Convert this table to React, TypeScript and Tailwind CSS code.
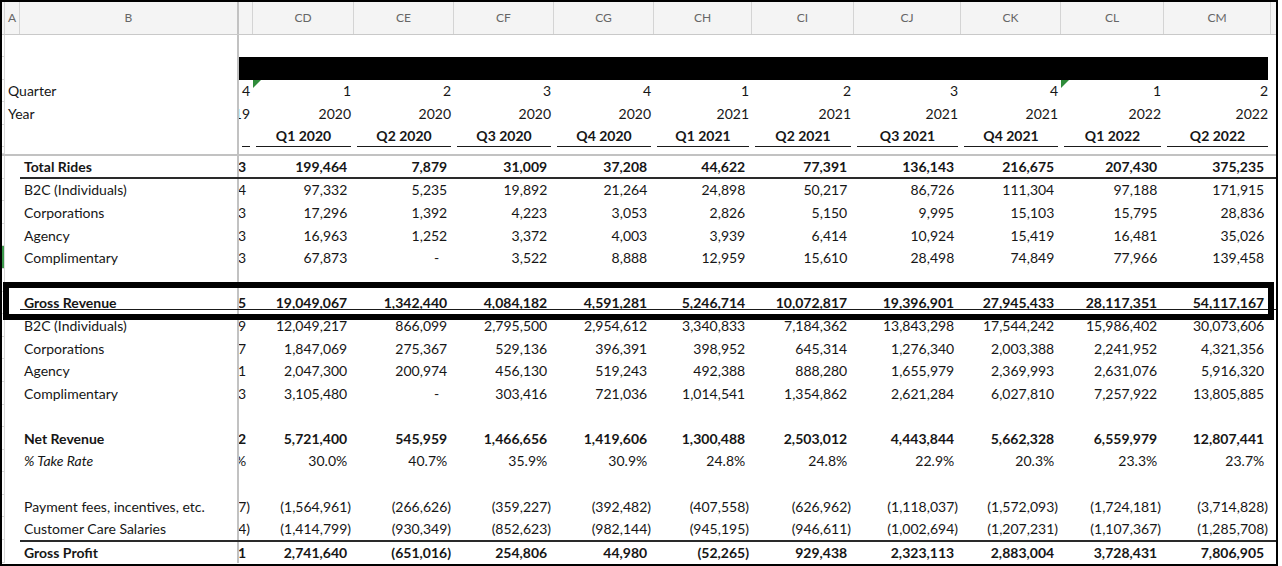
import clsx from "clsx";

const COLS = ["CD", "CE", "CF", "CG", "CH", "CI", "CJ", "CK", "CL", "CM"];
// column widths as they sit in the screenshot (not all equal)
const W = [
  "w-[101px]",
  "w-[100px]",
  "w-[100px]",
  "w-[100px]",
  "w-[98px]",
  "w-[102px]",
  "w-[107px]",
  "w-[100px]",
  "w-[103px]",
  "w-[107px]",
];

type Kind = "acct" | "plain" | "qlabel";

interface RowDef {
  label?: string;
  inA?: boolean;
  vals?: string[];
  sliver?: string;
  kind?: Kind;
  bold?: boolean;
  italic?: boolean;
  line?: "thickB" | "thinB" | "thickT";
  green?: boolean;
  bar?: boolean;
  h?: string;
  flags?: number[];
}

const ROWS: RowDef[] = [
  {},
  { bar: true },
  {
    label: "Quarter",
    inA: true,
    kind: "plain",
    sliver: "4",
    vals: ["1", "2", "3", "4", "1", "2", "3", "4", "1", "2"],
    flags: [0, 8],
  },
  {
    label: "Year",
    inA: true,
    kind: "plain",
    sliver: "2019",
    vals: ["2020", "2020", "2020", "2020", "2021", "2021", "2021", "2021", "2022", "2022"],
  },
  {
    kind: "qlabel",
    vals: ["Q1 2020", "Q2 2020", "Q3 2020", "Q4 2020", "Q1 2021", "Q2 2021", "Q3 2021", "Q4 2021", "Q1 2022", "Q2 2022"],
  },
];

const BODY: RowDef[] = [
  {
    label: "Total Rides",
    bold: true,
    line: "thickB",
    sliver: "163",
    vals: ["199,464", "7,879", "31,009", "37,208", "44,622", "77,391", "136,143", "216,675", "207,430", "375,235"],
  },
  {
    label: "B2C (Individuals)",
    sliver: "104",
    vals: ["97,332", "5,235", "19,892", "21,264", "24,898", "50,217", "86,726", "111,304", "97,188", "171,915"],
  },
  {
    label: "Corporations",
    sliver: "13",
    vals: ["17,296", "1,392", "4,223", "3,053", "2,826", "5,150", "9,995", "15,103", "15,795", "28,836"],
  },
  {
    label: "Agency",
    sliver: "13",
    vals: ["16,963", "1,252", "3,372", "4,003", "3,939", "6,414", "10,924", "15,419", "16,481", "35,026"],
  },
  {
    label: "Complimentary",
    green: true,
    sliver: "23",
    vals: ["67,873", "-", "3,522", "8,888", "12,959", "15,610", "28,498", "74,849", "77,966", "139,458"],
  },
  {},
  {
    label: "Gross Revenue",
    bold: true,
    line: "thinB",
    sliver: "15",
    vals: [
      "19,049,067",
      "1,342,440",
      "4,084,182",
      "4,591,281",
      "5,246,714",
      "10,072,817",
      "19,396,901",
      "27,945,433",
      "28,117,351",
      "54,117,167",
    ],
  },
  {
    label: "B2C (Individuals)",
    sliver: "19",
    vals: [
      "12,049,217",
      "866,099",
      "2,795,500",
      "2,954,612",
      "3,340,833",
      "7,184,362",
      "13,843,298",
      "17,544,242",
      "15,986,402",
      "30,073,606",
    ],
  },
  {
    label: "Corporations",
    sliver: "17",
    vals: ["1,847,069", "275,367", "529,136", "396,391", "398,952", "645,314", "1,276,340", "2,003,388", "2,241,952", "4,321,356"],
  },
  {
    label: "Agency",
    sliver: "11",
    vals: ["2,047,300", "200,974", "456,130", "519,243", "492,388", "888,280", "1,655,979", "2,369,993", "2,631,076", "5,916,320"],
  },
  {
    label: "Complimentary",
    sliver: "13",
    vals: ["3,105,480", "-", "303,416", "721,036", "1,014,541", "1,354,862", "2,621,284", "6,027,810", "7,257,922", "13,805,885"],
  },
  {},
  {
    label: "Net Revenue",
    bold: true,
    sliver: "12",
    vals: ["5,721,400", "545,959", "1,466,656", "1,419,606", "1,300,488", "2,503,012", "4,443,844", "5,662,328", "6,559,979", "12,807,441"],
  },
  {
    label: "% Take Rate",
    italic: true,
    sliver: "0%",
    vals: ["30.0%", "40.7%", "35.9%", "30.9%", "24.8%", "24.8%", "22.9%", "20.3%", "23.3%", "23.7%"],
  },
  {},
  {
    label: "Payment fees, incentives, etc.",
    sliver: "(17)",
    vals: [
      "(1,564,961)",
      "(266,626)",
      "(359,227)",
      "(392,482)",
      "(407,558)",
      "(626,962)",
      "(1,118,037)",
      "(1,572,093)",
      "(1,724,181)",
      "(3,714,828)",
    ],
  },
  {
    label: "Customer Care Salaries",
    sliver: "(14)",
    vals: [
      "(1,414,799)",
      "(930,349)",
      "(852,623)",
      "(982,144)",
      "(945,195)",
      "(946,611)",
      "(1,002,694)",
      "(1,207,231)",
      "(1,107,367)",
      "(1,285,708)",
    ],
  },
  {
    label: "Gross Profit",
    bold: true,
    line: "thickT",
    sliver: "11",
    vals: ["2,741,640", "(651,016)", "254,806", "44,980", "(52,265)", "929,438", "2,323,113", "2,883,004", "3,728,431", "7,806,905"],
  },
];

function Val({ v, kind }: { v: string; kind: Kind }) {
  if (kind === "plain") return <span>{v}</span>;
  if (v === "-")
    return (
      <span>
        -<span className="invisible">0)</span>
      </span>
    );
  if (v.endsWith(")")) return <span>{v}</span>;
  return (
    <span>
      {v}
      <span className="invisible">)</span>
    </span>
  );
}

function Flag() {
  return (
    <svg className="absolute left-0 top-0" width="8" height="8" viewBox="0 0 8 8">
      <polygon points="0,0 8,0 0,8" fill="#2e8b3a" />
    </svg>
  );
}

function Row({ r }: { r: RowDef }) {
  const kind = r.kind ?? "acct";
  // italics only apply to the row label, the figures stay upright
  const num = clsx(r.bold && "font-bold");
  const lbl = clsx(r.bold && "font-bold", r.italic && "italic");
  return (
    <div className={clsx("flex shrink-0", r.h ?? "h-[22.6px]")}>
      <div
        className={clsx(
          "w-[3px] shrink-0 border-b border-r border-[#d9d9d9]",
          r.green && "bg-[#3c9a4c]"
        )}
      />
      {r.inA ? (
        <div className="flex w-[232px] shrink-0 items-center whitespace-nowrap pl-[3px]">{r.label}</div>
      ) : (
        <div className="w-[15px] shrink-0" />
      )}
      <div
        className={clsx(
          "relative flex grow",
          r.line === "thickB" && "border-b-2 border-[#2a2a2a]",
          r.line === "thickT" && "border-t-2 border-[#2a2a2a]"
        )}
      >
        {!r.inA && (
          <div className={clsx("flex w-[217px] shrink-0 items-center whitespace-nowrap pl-[4px]", lbl)}>
            {r.label}
          </div>
        )}
        <div className="w-[2px] shrink-0 bg-[#c2c2c2]" />
        {r.bar ? (
          <div className="w-[1029px] shrink-0 bg-black" />
        ) : (
          <>
            <div className="flex w-[14px] shrink-0 items-center justify-end overflow-hidden whitespace-nowrap px-[3px]">
              {kind === "qlabel" ? (
                <div className="h-full w-full border-b border-[#1a1a1a]" />
              ) : (
                r.sliver && (
                  <span className={num}>
                    <Val v={r.sliver} kind={kind} />
                  </span>
                )
              )}
            </div>
            {r.vals?.map((v, i) =>
              kind === "qlabel" ? (
                <div key={i} className={clsx(W[i], "shrink-0 px-[3px]")}>
                  <div className="flex h-full items-center justify-center border-b border-[#1a1a1a] font-bold">
                    {v}
                  </div>
                </div>
              ) : (
                <div
                  key={i}
                  className={clsx(
                    W[i],
                    "relative flex shrink-0 items-center justify-end whitespace-nowrap px-[3px]",
                    num
                  )}
                >
                  {r.flags?.includes(i) && <Flag />}
                  <Val v={v} kind={kind} />
                </div>
              )
            )}
          </>
        )}
        {r.line === "thinB" && <div className="absolute bottom-[4px] left-0 right-0 h-px bg-[#1a1a1a]" />}
      </div>
    </div>
  );
}

export default function App() {
  return (
    <div className="h-[566px] w-[1282px] bg-white">
      <div className="relative flex h-[566px] w-[1278px] flex-col overflow-hidden border-2 border-black bg-white font-['Lato','Liberation_Sans',sans-serif] text-[14px] text-[#161616]">
        {/* column letters */}
        <div className="flex h-[32.5px] shrink-0 border-b border-[#c9c9c9] bg-[#f4f4f4] text-[12px] text-[#666]">
          <div className="w-[3px] shrink-0 border-r border-[#d4d4d4]" />
          <div className="flex w-[15px] shrink-0 items-center justify-center border-r border-[#d4d4d4]">A</div>
          <div className="flex w-[217px] shrink-0 items-center justify-center">B</div>
          <div className="w-[2px] shrink-0 bg-[#c2c2c2]" />
          <div className="w-[14px] shrink-0 border-r border-[#d4d4d4]" />
          {COLS.map((c, i) => (
            <div
              key={c}
              className={clsx(W[i], "flex shrink-0 items-center justify-center border-r border-[#d4d4d4]")}
            >
              {c}
            </div>
          ))}
        </div>

        {ROWS.map((r, i) => (
          <Row key={i} r={r} />
        ))}
        <Row r={{ h: "h-[6.5px]" }} />
        {/* frozen pane split */}
        <div className="h-[2px] shrink-0 bg-[#c2c2c2]" />

        {BODY.map((r, i) => (
          <Row key={i} r={r} />
        ))}

        {/* annotation box round Gross Revenue */}
        <div className="absolute left-[1px] top-[280px] h-[38px] w-[1271px] border-[6px] border-black" />
      </div>
    </div>
  );
}
